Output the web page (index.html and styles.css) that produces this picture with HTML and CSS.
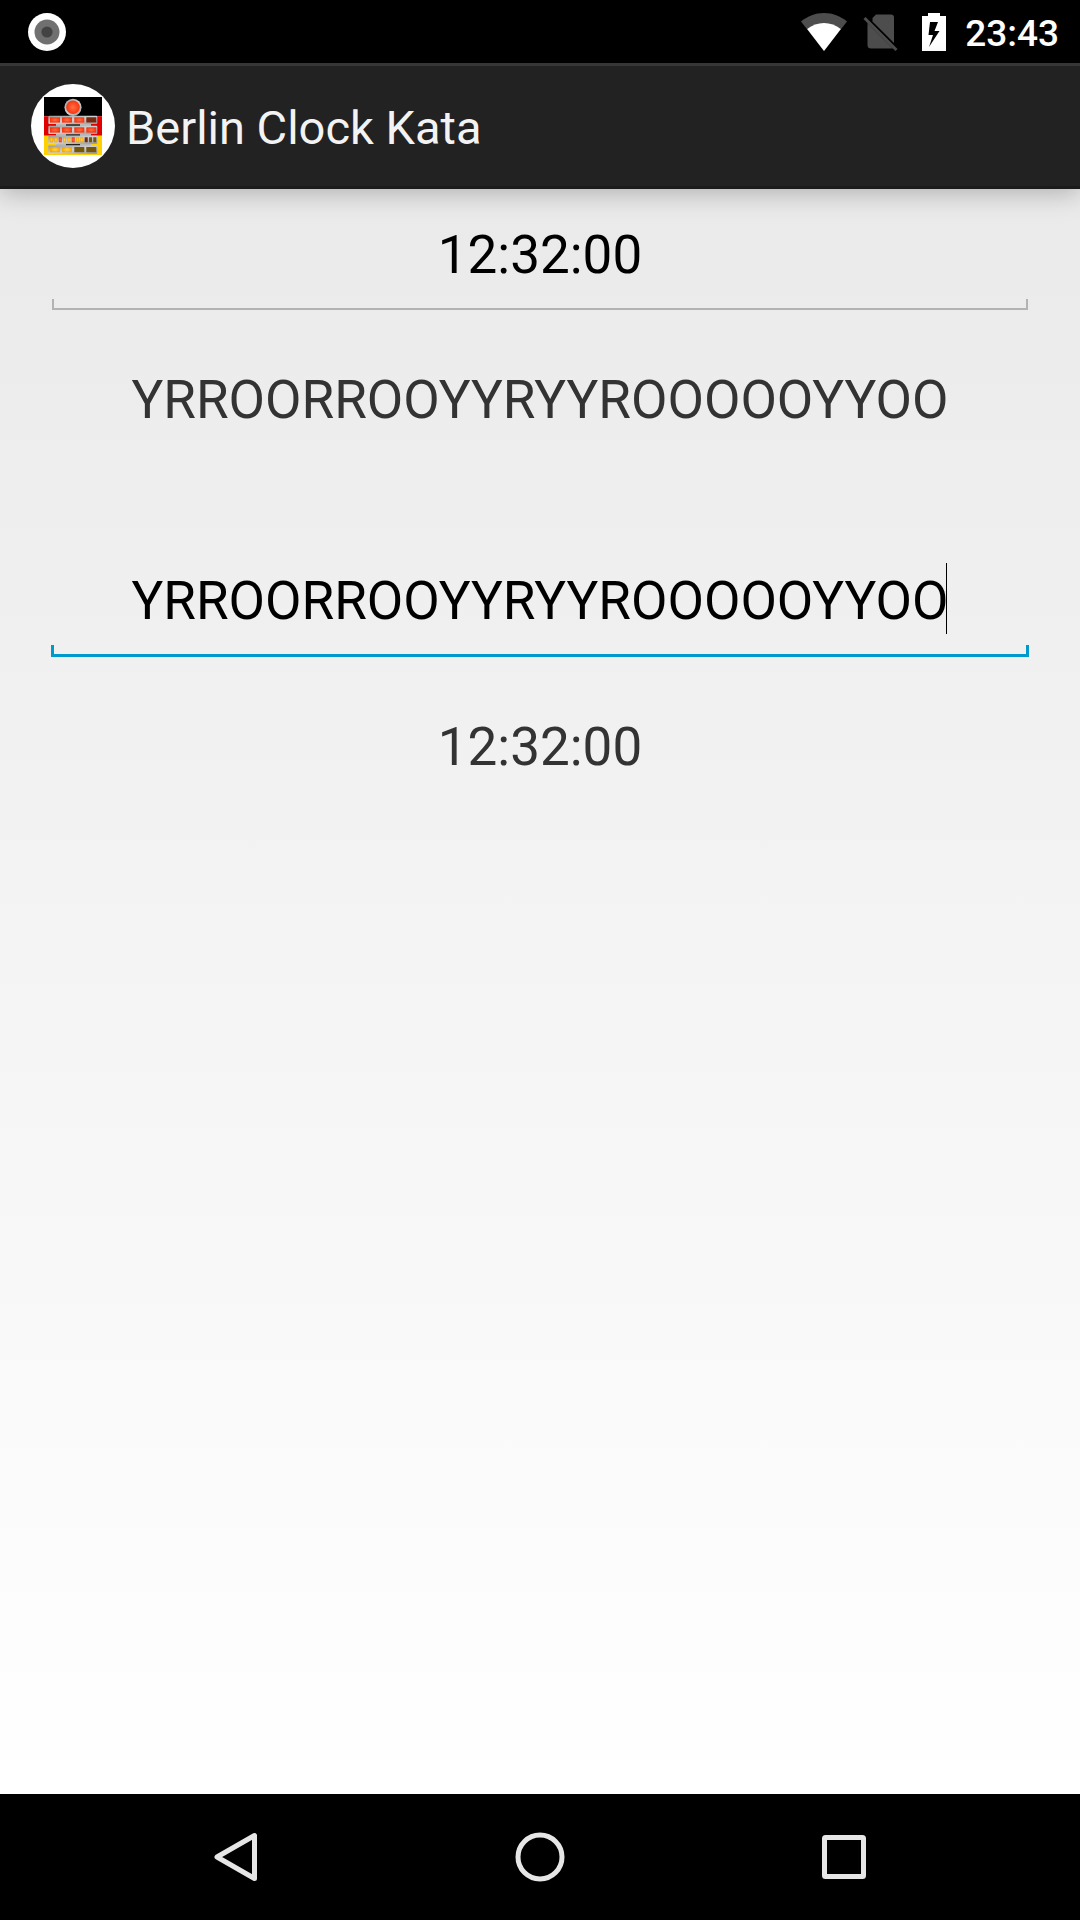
FILE: index.html
```html
<!DOCTYPE html>
<html lang="en">
<head>
<meta charset="utf-8">
<meta name="viewport" content="width=device-width, initial-scale=1">
<title>Berlin Clock Kata</title>
<link rel="stylesheet" href="styles.css">
</head>
<body>
<div class="status">
  <svg class="status-record" viewBox="0 0 38 38" aria-hidden="true">
    <circle cx="19" cy="19" r="19" fill="#fff"/>
    <circle cx="19" cy="19" r="12.5" fill="#707070"/>
    <circle cx="19" cy="19" r="5.6" fill="#434343"/>
  </svg>
  <svg class="status-wifi" viewBox="0 0 48 38" aria-hidden="true">
    <path d="M24 38 L1 8.6 C7.500 3 15.500 0 24 0 S40.500 3 47 8.600Z" fill="#4d4d4d"/>
    <path d="M24 38 L7.200 16 C12 12 18 10 24 10 S36 12 40.800 16Z" fill="#fff"/>
  </svg>
  <svg class="status-sim" viewBox="0 0 36 38" aria-hidden="true">
    <path d="M13 1.500 H28 Q31 1.500 31 4.500 V30 L9.500 8.500 V5Z" fill="#4d4d4d"/>
    <path d="M4.500 10 L30 35.500 H8 Q4.500 35.500 4.500 32Z" fill="#4d4d4d"/>
    <path d="M1.500 5 L33.500 37" stroke="#4d4d4d" stroke-width="3"/>
  </svg>
  <svg class="status-battery" viewBox="0 0 24 38" aria-hidden="true">
    <path fill-rule="evenodd" fill="#fff" d="M6 0H18V3H24V38H0V3H6Z M8 9L6.500 22H11L7 34L17.500 18H12.500L16 9Z"/>
  </svg>
  <time class="status-time">23:43</time>
</div>

<header class="bar">
  <svg class="bar-logo" viewBox="0 0 84 84" aria-hidden="true">
    <defs>
      <linearGradient id="metal" x1="0" x2="1" y1="0" y2="1"><stop offset="0" stop-color="#999"/><stop offset=".5" stop-color="#d0d0d0"/><stop offset="1" stop-color="#999"/></linearGradient>
      <radialGradient id="red"><stop offset="0" stop-color="#ff7043"/><stop offset="1" stop-color="#f8340f"/></radialGradient>
      <radialGradient id="yellow"><stop offset="0" stop-color="#ffd94a"/><stop offset="1" stop-color="#f7a800"/></radialGradient>
    </defs>
    <circle cx="42" cy="42" r="42" fill="#fff"/>
    <path fill="#000" d="M13 13H71V32.300H13Z"/>
    <path fill="#e00000" d="M13 32.300H71V51.700H13Z"/>
    <path fill="#ffd000" d="M13 51.700H71V71H13Z"/>
    <circle cx="42" cy="23.300" r="8.600" fill="url(#metal)"/>
    <circle cx="42" cy="23.300" r="6.800" fill="url(#red)"/>
    <path fill="#b8b8b8" d="M25 38H60V64H25Z"/>
    <g fill="url(#metal)">
      <rect x="17.300" y="31.700" width="49" height="8.400" rx="1"/>
      <rect x="17.300" y="41.700" width="49" height="8.400" rx="1"/>
      <rect x="17.300" y="51.700" width="49" height="8.200" rx="1"/>
      <rect x="17.300" y="61.400" width="49" height="8.600" rx="1"/>
    </g>
    <path stroke="#222" stroke-width="1.300" d="M35 41H49M35 50.800H49M35 60.600H49"/>
    <g fill="url(#red)">
      <rect x="19" y="33.300" width="10" height="5.300"/><rect x="31" y="33.300" width="10" height="5.300"/><rect x="43.300" y="33.300" width="10" height="5.300"/>
      <rect x="19" y="43.300" width="10" height="5.300"/><rect x="31" y="43.300" width="10" height="5.300"/><rect x="43.300" y="43.300" width="10" height="5.300"/><rect x="55.300" y="43.300" width="10" height="5.300"/>
      <rect x="27.800" y="53.300" width="3" height="5"/><rect x="40.700" y="53.300" width="3" height="5"/>
    </g>
    <g fill="url(#yellow)">
      <rect x="19" y="53.300" width="3" height="5"/><rect x="23.400" y="53.300" width="3" height="5"/><rect x="32.100" y="53.300" width="3" height="5"/><rect x="36.400" y="53.300" width="3" height="5"/><rect x="45" y="53.300" width="3" height="5"/><rect x="49.300" y="53.300" width="3" height="5"/>
      <rect x="19" y="63" width="10" height="5.300"/><rect x="31" y="63" width="10" height="5.300"/>
    </g>
    <path fill="#74280f" d="M55.300 33.300H65.300V38.600H55.300ZM53.700 53.300H56.700V58.300H53.700Z"/>
    <path fill="#74560c" d="M58 53.300H61V58.300H58ZM62.300 53.300H65.300V58.300H62.300ZM43.300 63H53.300V68.300H43.300ZM55.300 63H65.300V68.300H55.300Z"/>
  </svg>
  <h1 class="bar-title">Berlin Clock Kata</h1>
</header>

<main class="content">
  <form class="converter">
    <div class="field">
      <input class="field-input" id="time" type="text" value="12:32:00" aria-label="Time" autocomplete="off">
      <span class="field-line"></span>
    </div>
    <output class="result" for="time">YRROORROOYYRYYROOOOOYYOO</output>
  </form>
  <form class="converter">
    <div class="field field-active">
      <input class="field-input" id="lamps" type="text" value="YRROORROOYYRYYROOOOOYYOO" aria-label="Berlin clock lamps" autocomplete="off" spellcheck="false">
      <span class="field-line"></span>
      <span class="field-caret"></span>
    </div>
    <output class="result" for="lamps">12:32:00</output>
  </form>
</main>

<nav class="nav">
  <button class="nav-button" type="button" aria-label="Back">
    <svg viewBox="0 0 50 50"><path d="M43.500 3.500V46.500L6 25Z" stroke-linejoin="round"/></svg>
  </button>
  <button class="nav-button" type="button" aria-label="Home">
    <svg viewBox="0 0 50 50"><circle cx="25" cy="25" r="22"/></svg>
  </button>
  <button class="nav-button" type="button" aria-label="Recent apps">
    <svg viewBox="0 0 50 50"><rect x="5.500" y="5.500" width="39" height="39" rx="1"/></svg>
  </button>
</nav>
</body>
</html>
```
FILE: styles.css
```css
* {
  box-sizing: border-box;
}

body {
  display: flex;
  flex-direction: column;
  min-height: 100vh;
  margin: 0;
  background: #000;
  font-family: Roboto, sans-serif;
}

.status {
  display: flex;
  align-items: center;
  height: 63px;
  padding: 0 21px 0 28px;
  color: #fff;
}

.status-record {
  width: 38px;
  height: 38px;
  margin-right: auto;
}

.status-wifi {
  width: 48px;
  height: 38px;
}

.status-sim {
  width: 36px;
  height: 38px;
  margin: 0 23px 0 15px;
}

.status-battery {
  width: 24px;
  height: 38px;
  margin-right: 19px;
}

.status-time {
  padding-top: 4px;
  font-size: 37px;
  font-weight: 500;
  line-height: 42px;
}

.bar {
  position: relative;
  display: flex;
  align-items: center;
  gap: 11px;
  height: 126px;
  padding: 0 31px;
  border-top: 3px solid #363636;
  border-bottom: 3px solid #1b1b1b;
  background: #222;
  box-shadow: 0 4px 24px rgba(0, 0, 0, 0.25);
}

.bar-logo {
  width: 84px;
  height: 84px;
}

.bar-title {
  margin: 0;
  padding-top: 4px;
  color: #f3f3f3;
  font-size: 47px;
  font-weight: 400;
  line-height: 56px;
}

.content {
  display: flex;
  flex: 1;
  flex-direction: column;
  gap: 137px;
  padding: 34px 52px;
  background: linear-gradient(#eaeaea, #fff);
}

.converter {
  display: flex;
  flex-direction: column;
  gap: 58px;
}

.field {
  position: relative;
  display: flex;
  flex-direction: column;
  gap: 12px;
}

.field-input {
  width: 100%;
  height: 64px;
  padding: 0;
  border: 0;
  outline: 0;
  background: transparent;
  color: #000;
  font: 400 53px/64px Roboto, sans-serif;
  text-align: center;
}

.field-line {
  height: 11px;
  border: solid #b3b3b3;
  border-width: 0 2px 2px;
}

.field-active .field-line {
  height: 12px;
  margin: 0 -1px;
  border-color: #0099cc;
  border-width: 0 3px 3px;
}

/* Text cursor after the last character */
.field-caret {
  position: absolute;
  top: -6px;
  left: calc(50% + 406px);
  width: 1px;
  height: 71px;
  background: #000;
}

.result {
  color: #333;
  font-size: 53px;
  line-height: 64px;
  text-align: center;
}

.nav {
  display: flex;
  justify-content: center;
  gap: 54px;
  height: 126px;
}

.nav-button {
  display: flex;
  flex: 0 1 250px;
  align-items: center;
  justify-content: center;
  padding: 0;
  border: 0;
  background: transparent;
}

.nav-button svg {
  width: 50px;
  height: 50px;
  fill: none;
  stroke: #e6e6e6;
  stroke-width: 5;
}
```
